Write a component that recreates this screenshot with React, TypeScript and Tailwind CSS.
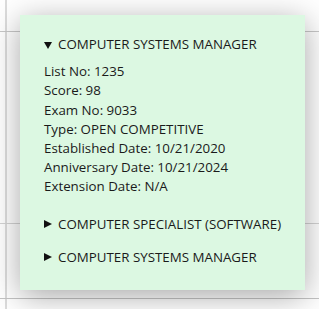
import React from "react";

const Tri = ({ down }: { down?: boolean }) => (
  <svg width="8" height="8" viewBox="0 0 8 8" className="shrink-0">
    {down ? <polygon points="0,1 8,1 4,8" fill="#111" /> : <polygon points="0,0 8,4 0,8" fill="#111" />}
  </svg>
);

export default function App() {
  const rows = [
    "List No: 1235",
    "Score: 98",
    "Exam No: 9033",
    "Type: OPEN COMPETITIVE",
    "Established Date: 10/21/2020",
    "Anniversary Date: 10/21/2024",
    "Extension Date: N/A",
  ];
  return (
    <div className="relative w-[319px] h-[309px] overflow-hidden bg-white" style={{ fontFamily: '"Open Sans", sans-serif' }}>
      <div className="absolute left-[5px] top-0 h-full w-[2px] bg-[#dcdcdc]" />
      <div className="absolute left-0 top-[31px] w-full h-px bg-[#c8c8c8]" />
      <div className="absolute left-0 top-[223px] w-full h-px bg-[#d4d4d4]" />
      <div className="absolute left-0 top-[298px] w-full h-px bg-[#c4c4c4]" />
      <div className="absolute left-[20px] top-[15px] w-[285px] h-[275px] bg-[#dcf8e2] shadow-[0_6px_30px_rgba(0,0,0,0.35)] pl-[24px] pt-[20px] text-[13.33px] leading-[19.2px] text-[#1a1a1a]">
        <div className="flex items-center gap-[6px]">
          <Tri down />
          <span>COMPUTER SYSTEMS MANAGER</span>
        </div>
        <div className="mt-[8px] flex flex-col">
          {rows.map((r) => (
            <div key={r}>{r}</div>
          ))}
        </div>
        <div className="mt-[18px] flex items-center gap-[6px]">
          <Tri />
          <span>COMPUTER SPECIALIST (SOFTWARE)</span>
        </div>
        <div className="mt-[14px] flex items-center gap-[6px]">
          <Tri />
          <span>COMPUTER SYSTEMS MANAGER</span>
        </div>
      </div>
    </div>
  );
}
